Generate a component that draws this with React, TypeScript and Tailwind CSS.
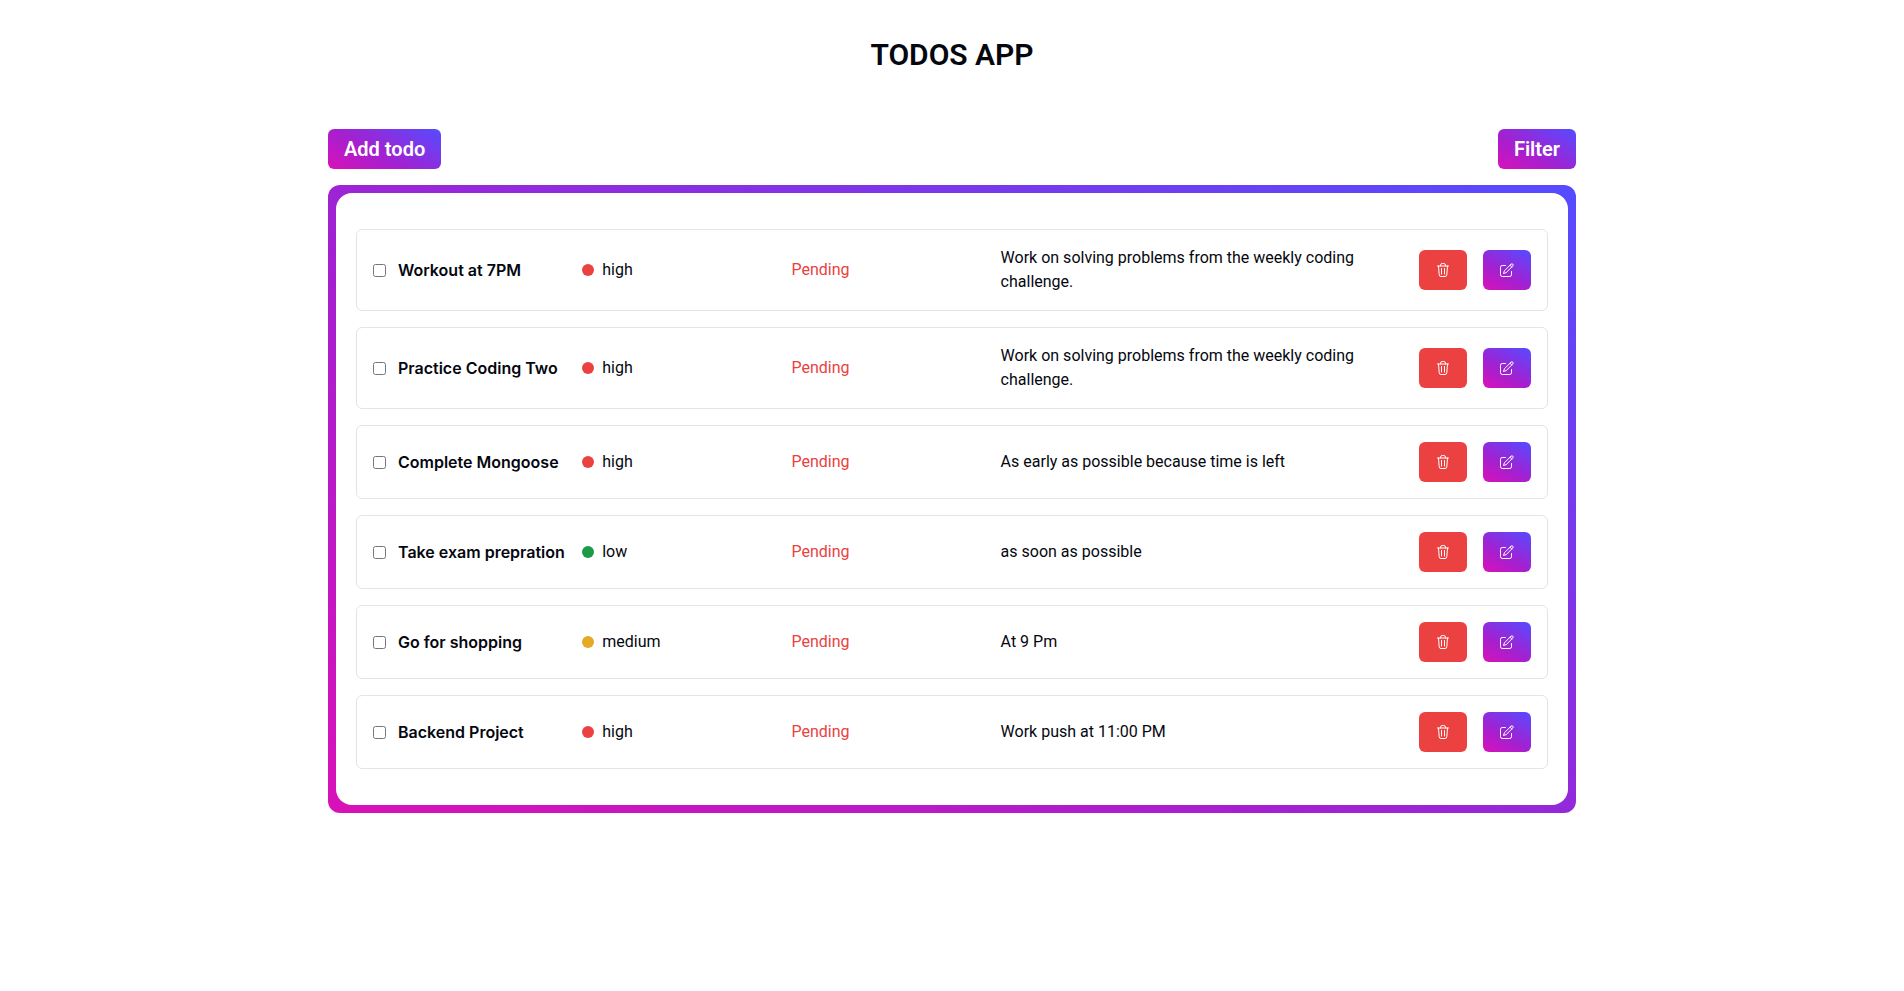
import { useState } from 'react'

type Priority = 'high' | 'medium' | 'low'

type Todo = {
  id: number
  title: string
  description: string
  priority: Priority
}

const todos: Todo[] = [
  { id: 1, title: 'Workout at 7PM', priority: 'high', description: 'Work on solving problems from the weekly coding challenge.' },
  { id: 2, title: 'Practice Coding Two', priority: 'high', description: 'Work on solving problems from the weekly coding challenge.' },
  { id: 3, title: 'Complete Mongoose', priority: 'high', description: 'As early as possible because time is left' },
  { id: 4, title: 'Take exam prepration', priority: 'low', description: 'as soon as possible' },
  { id: 5, title: 'Go for shopping', priority: 'medium', description: 'At 9 Pm' },
  { id: 6, title: 'Backend Project', priority: 'high', description: 'Work push at 11:00 PM' },
]

const dotColor: Record<Priority, string> = {
  high: 'bg-[#eb4141]',
  medium: 'bg-[#e5aa25]',
  low: 'bg-[#1c9a46]',
}

const gradient = 'bg-[linear-gradient(30deg,#d911b8_0%,#a420d0_41%,#574bff_99%)]'

function TrashIcon() {
  return (
    <svg className="size-4" viewBox="0 0 16 16" fill="none" stroke="currentColor" strokeLinecap="round" strokeLinejoin="round" aria-hidden="true">
      <path d="M2.500 4h11M3.500 4l.7 8.800a1.800 1.800 0 0 0 1.800 1.700h4a1.800 1.800 0 0 0 1.800-1.700L12.500 4M5.500 4v-.8A1.700 1.700 0 0 1 7.200 1.500h1.600a1.700 1.700 0 0 1 1.700 1.700V4M6.500 6.500v5.500M9.500 6.500v5.500" />
    </svg>
  )
}

function EditIcon() {
  return (
    <svg className="size-4" viewBox="0 0 16 16" fill="none" stroke="currentColor" strokeLinecap="round" strokeLinejoin="round" aria-hidden="true">
      <path d="M6.500 3.500H3.200a1.700 1.700 0 0 0-1.700 1.700v7.600a1.700 1.700 0 0 0 1.700 1.700h7.600a1.700 1.700 0 0 0 1.700-1.700V9.500" />
      <path d="m12 2.200-6.600 6.600-.9 2.700 2.700-.9L13.800 4a1.270 1.270 0 0 0-1.800-1.800ZM11 3.200 12.800 5" />
    </svg>
  )
}

function TodoCard({ todo }: { todo: Todo }) {
  const [done, setDone] = useState(false)
  const inputId = `todo-${todo.id}`

  return (
    <li className="flex items-center rounded-md border border-[#e3e4e8] bg-white p-4">
      <div className="flex flex-1 items-center gap-3">
        <input id={inputId} type="checkbox" checked={done} onChange={() => setDone(!done)} className="size-[13px] shrink-0" />
        <label htmlFor={inputId} className="font-[Inter,sans-serif] font-semibold whitespace-nowrap">
          {todo.title}
        </label>
      </div>
      <div className="flex flex-1 items-center gap-2">
        <span className={`size-3 rounded-full ${dotColor[todo.priority]}`} />
        <p>{todo.priority}</p>
      </div>
      <div className="flex-1">
        {done ? <p className="text-green-600">Done</p> : <p className="text-[#eb4141]">Pending</p>}
      </div>
      <p className="flex-[2]">{todo.description}</p>
      <div className="flex gap-4">
        <button type="button" aria-label="Delete" className="flex h-10 items-center rounded-md bg-[#eb4141] px-4 text-white">
          <TrashIcon />
        </button>
        <button type="button" aria-label="Edit" className={`flex h-10 items-center rounded-md px-4 text-white ${gradient}`}>
          <EditIcon />
        </button>
      </div>
    </li>
  )
}

export default function App() {
  return (
    <main className="mx-auto max-w-7xl px-4 font-[Roboto,sans-serif] text-[#05070f]">
      <h1 className="pt-[37px] pb-9 text-center text-3xl font-semibold">TODOS APP</h1>
      <div className="mt-5 mb-4 flex justify-between">
        <button type="button" className={`h-10 rounded-md px-4 text-xl font-semibold text-white ${gradient}`}>
          Add todo
        </button>
        <button type="button" className={`h-10 rounded-md px-4 text-xl font-semibold text-white ${gradient}`}>
          Filter
        </button>
      </div>
      <div className={`rounded-xl p-2 ${gradient}`}>
        <ul className="space-y-4 rounded-2xl bg-white px-5 py-9">
          {todos.map(todo => (
            <TodoCard key={todo.id} todo={todo} />
          ))}
        </ul>
      </div>
    </main>
  )
}
